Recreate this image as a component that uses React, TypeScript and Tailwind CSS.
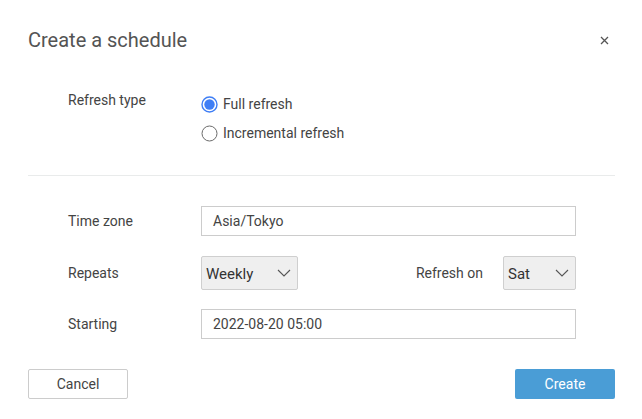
const font = { fontFamily: "Roboto, 'Noto Sans', sans-serif" };

function Radio({ checked, label }: { checked?: boolean; label: string }) {
  return (
    <label className="flex h-[20px] items-center gap-[5px] text-[14px] text-[#444]">
      <svg width="17" height="17" viewBox="0 0 17 17">
        {checked ? (
          <>
            <circle cx="8.5" cy="8.5" r="7.5" fill="none" stroke="#3f7ef5" strokeWidth="1.4" />
            <circle cx="8.5" cy="8.5" r="5.2" fill="#3f7ef5" />
          </>
        ) : (
          <circle cx="8.5" cy="8.5" r="7.5" fill="white" stroke="#6b6b6b" strokeWidth="1" />
        )}
      </svg>
      <span>{label}</span>
    </label>
  );
}

function Chevron() {
  return (
    <svg width="14" height="8" viewBox="0 0 14 8">
      <path d="M1 1L7 7L13 1" fill="none" stroke="#555" strokeWidth="1.1" />
    </svg>
  );
}

function Select({ value, width }: { value: string; width: string }) {
  return (
    <div
      className={`flex h-[34px] ${width} items-center justify-between rounded-[2px] border border-[#cfcfcf] bg-[#efefef] pl-[4px] pr-[6px] text-[15px] text-[#333]`}
    >
      <span className="pt-[2px]">{value}</span>
      <Chevron />
    </div>
  );
}

function Row({ label, children }: { label: string; children: React.ReactNode }) {
  return (
    <div className="flex items-center">
      <div className="w-[173px] pl-[40px] text-[14px] text-[#444]">{label}</div>
      <div className="w-[375px]">{children}</div>
    </div>
  );
}

function TextInput({ value }: { value: string }) {
  return (
    <div className="flex h-[30px] items-center border border-[#cccccc] px-[11px] text-[14px] text-[#444]">
      {value}
    </div>
  );
}

export default function App() {
  return (
    <div className="h-[419px] w-[642px] bg-white pl-[28px] pr-[27px] pt-[26px]" style={font}>
      <div className="flex h-[28px] items-center justify-between">
        <h1 className="text-[20px] text-[#545454]">Create a schedule</h1>
        <svg width="9" height="9" viewBox="0 0 9 9" className="mr-[6px]">
          <path d="M1 1L8 8M8 1L1 8" stroke="#555" strokeWidth="1.3" />
        </svg>
      </div>

      <div className="mt-[36px] flex">
        <div className="w-[173px] pl-[40px] text-[14px] leading-[20px] text-[#444]">Refresh type</div>
        <div className="flex flex-col gap-[9px] pt-[4px]">
          <Radio checked label="Full refresh" />
          <Radio label="Incremental refresh" />
        </div>
      </div>

      <div className="mt-[32px] h-px bg-[#e9ebeb]" />

      <div className="mt-[30px] flex flex-col">
        <Row label="Time zone">
          <TextInput value="Asia/Tokyo" />
        </Row>
        <div className="mt-[20px]">
          <Row label="Repeats">
            <div className="flex items-center justify-between">
              <Select value="Weekly" width="w-[97px]" />
              <div className="flex items-center gap-[20px]">
                <span className="text-[14px] text-[#444]">Refresh on</span>
                <Select value="Sat" width="w-[73px]" />
              </div>
            </div>
          </Row>
        </div>
        <div className="mt-[19px]">
          <Row label="Starting">
            <TextInput value="2022-08-20 05:00" />
          </Row>
        </div>
      </div>

      <div className="mt-[30px] flex justify-between">
        <button className="h-[30px] w-[100px] rounded-[2px] border border-[#cccccc] bg-white text-[14px] text-[#444]">
          Cancel
        </button>
        <button className="h-[30px] w-[100px] rounded-[2px] bg-[#4a9dd6] text-[14px] text-white">
          Create
        </button>
      </div>
    </div>
  );
}
